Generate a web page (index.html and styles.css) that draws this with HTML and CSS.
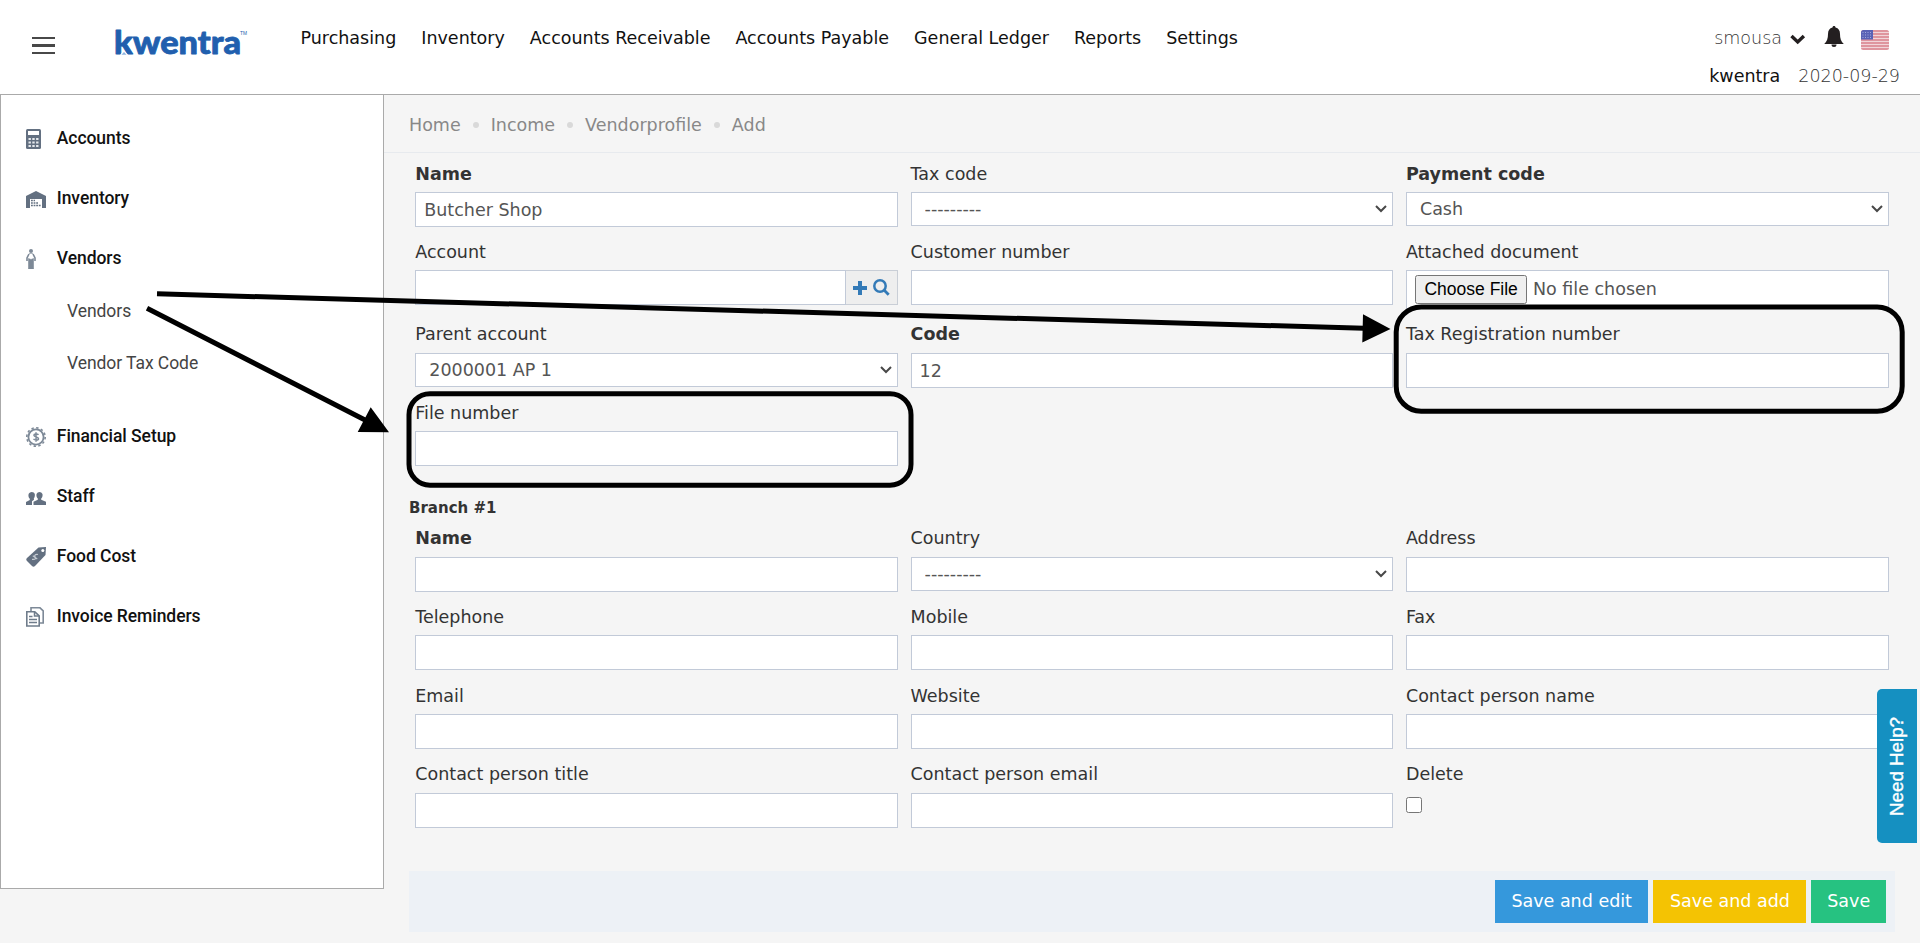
FILE: index.html
```html
<!DOCTYPE html>
<html lang="en">
<head>
<meta charset="utf-8">
<title>Kwentra - Add vendor profile</title>
<link rel="stylesheet" href="styles.css">
</head>
<body>
<header class="topbar">
  <button class="menu-toggle" aria-label="Toggle menu"><i class="bar"></i><i class="bar mid"></i><i class="bar"></i></button>
  <svg class="logo" width="132" height="30" viewBox="0 0 132 30">
    <text class="logo-word" x="-1" y="26.300" textLength="127" lengthAdjust="spacingAndGlyphs">kwentra</text>
    <path d="M5 26.800l4-4.300 4 4.300z" fill="#fff"/>
    <path d="M6.500 26.800l2.500-2.800 2.500 2.800z" fill="#8fb4e0"/>
    <text class="logo-tm" x="125" y="7" textLength="7" lengthAdjust="spacingAndGlyphs">TM</text>
  </svg>
  <nav class="mainnav">
    <a>Purchasing</a><a>Inventory</a><a>Accounts Receivable</a><a>Accounts Payable</a><a>General Ledger</a><a>Reports</a><a>Settings</a>
  </nav>
  <div class="account">
    <div class="account-top">
      <span class="light">smousa</span>
      <svg class="chev" width="16" height="11" viewBox="0 0 16 11"><path d="M1.500 2l6.200 6 6.200-6" fill="none" stroke="#231f20" stroke-width="3.400"/></svg>
      <svg class="bell" width="20" height="22" viewBox="0 0 20 22"><path d="M10 0c1 0 1.500.7 1.500 1.600 3 .7 4.500 3 4.500 6.400 0 4.500 1 7.500 3.800 10H.2C3 15.500 4 12.500 4 8c0-3.400 1.500-5.700 4.500-6.400C8.500.7 9 0 10 0zM7.500 18.500h5a2.500 2.500 0 0 1-5 0z" fill="#231f20"/></svg>
      <svg class="flag" width="28" height="20" viewBox="0 0 28 20">
        <clipPath id="fl"><rect width="28" height="20" rx="2.500"/></clipPath>
        <g clip-path="url(#fl)"><rect width="28" height="20" fill="#f1d5d9"/>
        <path d="M0 1h28M0 4h28M0 7h28M0 10h28M0 13h28M0 16h28M0 19h28" stroke="#d9808a" stroke-width="1.500"/>
        <rect width="12" height="9.500" fill="#5a62b5"/><path d="M1.500 2.500h10M1.500 5h10M1.500 7.500h10" stroke="#a3a8dc" stroke-dasharray="1 1.500"/></g>
      </svg>
    </div>
    <div class="account-sub"><span>kwentra</span><span class="light">2020-09-29</span></div>
  </div>
</header>
<div class="layout">
  <aside class="sidebar">
    <a class="item"><svg width="20" height="20" viewBox="0 0 20 20"><rect width="15" height="20" rx="1.500" fill="#637081"/><rect x="2" y="2" width="11" height="4" fill="#fff"/><path d="M2.500 10h10M2.500 13.500h10M2.500 17h10" stroke="#e6e9ed" stroke-width="2.200" stroke-dasharray="2.400 1.400"/></svg><span>Accounts</span></a>
    <a class="item"><svg width="20" height="20" viewBox="0 0 20 20"><path d="M0 7l10-5 10 5v12H0z" fill="#637081"/><path d="M4 10h12v9H4z" fill="#fff"/><path d="M5 11.500h4M5 14h7M5 16.500h10" stroke="#637081" stroke-width="1.600" stroke-dasharray="1.800 .8"/></svg><span>Inventory</span></a>
    <a class="item"><svg width="20" height="20" viewBox="0 0 20 20"><circle cx="5" cy="2" r="2" fill="#7d8997"/><path d="M3 5L1 9v3M7 5l2 4v3" fill="none" stroke="#7d8997" stroke-width="1.600"/><path d="M3 4.500h4M2.500 9.500L5 10.500l2.500-1V20h-5z" fill="#7d8997" stroke="#7d8997" stroke-width=".6"/></svg><span>Vendors</span></a>
    <div class="subitems"><a>Vendors</a><a>Vendor Tax Code</a></div>
    <a class="item"><svg width="20" height="20" viewBox="0 0 20 20"><circle cx="10" cy="10" r="7.600" fill="none" stroke="#7d8997" stroke-width="1.800"/><circle cx="10" cy="10" r="9.200" fill="none" stroke="#7d8997" stroke-width="1.600" stroke-dasharray="2.400 2.400"/><path d="M12.500 7.800c-1-1.300-4.600-1.300-4.600.5 0 2 4.600 1.300 4.600 3.400 0 1.900-3.900 1.700-5 .2M10 5.200v9.600" fill="none" stroke="#7d8997" stroke-width="1.500"/></svg><span>Financial Setup</span></a>
    <a class="item"><svg width="20" height="20" viewBox="0 0 20 20"><path d="M10.500 7a3.500 4 0 0 1 6 0c.3 2-.3 3.500-1.300 4.500v1.200l4.800 2V18H7.500v-3.300l4.300-2v-1.200c-1-1-1.600-2.500-1.300-4.500z" fill="#637081"/><path d="M2.500 7.500C3 4.300 8 4 8.800 7c.3 2-.3 3.500-1 4.500l.2 1.300-2 1.500V18H0v-3l3.800-2v-1.200c-1-1-1.600-2.300-1.300-4.300z" fill="#637081"/></svg><span>Staff</span></a>
    <a class="item"><svg width="20" height="20" viewBox="0 0 20 20"><path d="M12.500.5L20 0l-.5 8L9 19c-1 1-2 1-3 0l-5-5c-1-1-1-2 0-3z" fill="#637081"/><circle cx="16.800" cy="3.500" r="1.500" fill="#fff"/><path d="M12 7.500c-2-.6-4 .6-3 2.300s.8 3-3 2.500M6.800 8.800l4.500 3.200" fill="none" stroke="#c4cad1" stroke-width="1.200"/></svg><span>Food Cost</span></a>
    <a class="item"><svg width="20" height="20" viewBox="0 0 20 20"><path d="M5 4V.8h9l3.200 3V16H14" fill="none" stroke="#7d8997" stroke-width="1.600"/><path d="M.8 4.800h8l4.400 4V19H.8z" fill="#fff" stroke="#6f7c8b" stroke-width="1.600"/><path d="M8.500 5v4H13M3 9.500h3.500M3 12.500h8M3 15.500h8" fill="none" stroke="#6f7c8b" stroke-width="1.500"/></svg><span>Invoice Reminders</span></a>
  </aside>
  <main class="content">
    <div class="crumbs"><a>Home</a><i></i><a>Income</a><i></i><a>Vendorprofile</a><i></i><a>Add</a></div>
    <form class="form">
      <div class="grid">
        <div class="field"><label class="req">Name</label><input class="control" value="Butcher Shop"></div>
        <div class="field"><label>Tax code</label><select class="control"><option>---------</option></select></div>
        <div class="field"><label class="req">Payment code</label><select class="control"><option>Cash</option></select></div>
        <div class="field tall"><label>Account</label><div class="group"><input class="control"><span class="addon">
          <svg width="14" height="14" viewBox="0 0 14 14"><path d="M7 0v14M0 7h14" stroke="#337ab7" stroke-width="4"/></svg>
          <svg width="17" height="17" viewBox="0 0 17 17"><circle cx="7" cy="7" r="5.700" fill="none" stroke="#337ab7" stroke-width="2.500"/><path d="M11 11l4.700 4.700" stroke="#337ab7" stroke-width="2.800"/></svg></span></div></div>
        <div class="field"><label>Customer number</label><input class="control"></div>
        <div class="field"><label>Attached document</label><input class="control file" type="file"></div>
        <div class="field raised"><label>Parent account</label><select class="control"><option>2000001 AP 1</option></select></div>
        <div class="field raised"><label class="req">Code</label><input class="control" value="12"></div>
        <div class="field raised"><label>Tax Registration number</label><input class="control"></div>
        <div class="field"><label>File number</label><input class="control"></div>
      </div>
      <h5 class="branch">Branch #1</h5>
      <div class="grid branch-grid">
        <div class="field"><label class="req">Name</label><input class="control"></div>
        <div class="field"><label>Country</label><select class="control"><option>---------</option></select></div>
        <div class="field"><label>Address</label><input class="control"></div>
        <div class="field"><label>Telephone</label><input class="control"></div>
        <div class="field"><label>Mobile</label><input class="control"></div>
        <div class="field"><label>Fax</label><input class="control"></div>
        <div class="field"><label>Email</label><input class="control"></div>
        <div class="field"><label>Website</label><input class="control"></div>
        <div class="field"><label>Contact person name</label><input class="control"></div>
        <div class="field"><label>Contact person title</label><input class="control"></div>
        <div class="field"><label>Contact person email</label><input class="control"></div>
        <div class="field"><label>Delete</label><input class="check" type="checkbox"></div>
      </div>
      <div class="actions"><button type="button" class="btn blue">Save and edit</button><button type="button" class="btn yellow">Save and add</button><button type="button" class="btn green">Save</button></div>
    </form>
  </main>
</div>
<div class="help">Need Help?</div>
<svg class="marks" width="1920" height="943" viewBox="0 0 1920 943">
  <g fill="none" stroke="#000" stroke-width="5">
    <rect x="409" y="393.700" width="502" height="91.500" rx="21"/>
    <rect x="1396.200" y="306.900" width="506" height="104.300" rx="25"/>
    <path d="M157 293.800L1364 328.300M147 308.300L366 420.500"/>
  </g>
  <path d="M1363 314.200l27.500 14.800-28.200 13.500zM370.700 407.300L389 432.300l-31.300-.2z"/>
</svg>
</body>
</html>
```
FILE: styles.css
```css
* { box-sizing: border-box; }
body {
  margin: 0;
  height: 943px;
  overflow: hidden;
  background: #f5f5f5;
  color: #333;
  font: 17.5px/25px "DejaVu Sans", Verdana, sans-serif;
}
input, select, button { font: inherit; margin: 0; }

.topbar {
  display: flex;
  align-items: flex-start;
  height: 94px;
  background: #fff;
  color: #111;
}
.menu-toggle {
  display: flex;
  flex-direction: column;
  justify-content: space-between;
  width: 23px;
  height: 17px;
  margin: 37px 60px 0 32px;
  padding: 0;
  border: 0;
  background: none;
}
.bar { height: 2px; background: #484848; }
.bar.mid { height: 3px; }
.logo { margin-top: 28px; flex: none; overflow: visible; }
.logo-word {
  font: 900 31.5px Lato, sans-serif;
  fill: #215fae;
  stroke: #215fae;
  stroke-width: .8;
  stroke-linejoin: round;
}
.logo-tm { font: 5px "Liberation Sans", sans-serif; fill: #215fae; }
.mainnav { display: flex; gap: 25px; margin: 26px 0 0 53.500px; white-space: nowrap; }
.account { margin: 26px 20px 0 auto; }
.account-top { display: flex; align-items: flex-start; justify-content: flex-end; height: 38px; padding-right: 11.500px; }
.light { font-family: "DejaVu Sans Light", "DejaVu Sans", sans-serif; font-weight: 200; color: #333; }
.chev { margin: 8px 0 0 8px; }
.bell { margin: 0 0 0 17.500px; }
.flag { margin: 4px 0 0 17px; }
.account-sub { display: flex; gap: 18px; }

.layout { display: flex; border-top: 1px solid #aaa; }
.sidebar {
  flex: none;
  width: 384px;
  height: 794px;
  padding-top: 13px;
  border: 1px solid #aaa;
  border-top: 0;
  background: #fff;
  font-family: Roboto, sans-serif;
  letter-spacing: -.06px;
}
.item {
  display: flex;
  align-items: center;
  gap: 10.800px;
  height: 60px;
  padding-left: 25px;
  font-weight: 500;
  color: #111;
}
.item span { padding-top: 1px; }
.item svg { margin-top: 1px; }
.subitems { height: 118px; padding: 11px 0 0 66px; color: #444; }
.subitems a { display: block; height: 52px; }

.content { flex: 1; min-width: 0; }
.crumbs {
  display: flex;
  align-items: center;
  height: 58px;
  padding: 3px 0 0 25px;
  border-bottom: 1px solid #e7eaee;
  color: #888;
}
.crumbs i { width: 6px; height: 6px; margin: 0 12px; border-radius: 50%; background: #d9d9d9; }
.form { padding: 8.600px 25px 0; }
.grid { display: grid; grid-template-columns: repeat(3, 1fr); gap: 13.750px 12.500px; padding: 0 6.250px; }
.field { height: 65px; }
.field.tall { height: 68.500px; }
.field label { display: block; height: 25px; margin-bottom: 5px; }
.field.raised label { margin: -1px 0 6px; }
.field .req { font-weight: 700; }
.control {
  display: block;
  width: 100%;
  height: 35px;
  padding: 1px 7.500px 0 8px;
  border: 1px solid #c2cad8;
  border-radius: 0;
  background: #fff;
  color: #555;
  outline: 0;
}
select.control {
  height: 34px;
  padding: 2px 0 0 13px;
  appearance: none;
  background: #fff url("data:image/svg+xml,%3Csvg xmlns='http://www.w3.org/2000/svg' width='12' height='8'%3E%3Cpath d='M1 1l5 5 5-5' fill='none' stroke='%23484848' stroke-width='2'/%3E%3C/svg%3E") no-repeat right 5px center;
}
.file { height: 38.500px; padding: 4px 8px 0; }
.file::file-selector-button {
  width: 112.500px;
  height: 29px;
  margin-right: 5.500px;
  padding: 0;
  font: 17.5px "Liberation Sans", Arial, sans-serif;
}
.group { display: flex; }
.addon {
  flex: none;
  display: flex;
  align-items: center;
  justify-content: center;
  gap: 6px;
  width: 52.500px;
  border: 1px solid #c9ced6;
  border-left: 0;
  background: #eee;
}
.branch { height: 50px; margin: 0; padding-top: 33.500px; font-size: 15px; line-height: 16px; }
.branch-grid { margin-top: 9.850px; row-gap: 13.350px; }
.branch-grid .field { height: 65.400px; }
.branch-grid label { margin-bottom: 5.400px; }
.check { display: block; width: 16px; height: 16px; margin-top: 10px; }
.actions {
  display: flex;
  justify-content: flex-end;
  gap: 5px;
  height: 61px;
  margin-top: 43px;
  padding: 9px 9px 0;
  background: #edf1f6;
}
.btn { height: 43px; padding: 0 16.500px; border: 0; border-radius: 0; color: #fff; white-space: nowrap; }
.btn.blue { background: #3598dc; }
.btn.yellow { background: #f4c303; }
.btn.green { padding: 0 15.800px; background: #26c281; }

.help {
  position: absolute;
  right: 3px;
  top: 689px;
  width: 40px;
  height: 154px;
  border-radius: 0 5px 5px 0;
  background: #1590c1;
  color: #fff;
  font: 18.750px/40px "Liberation Sans", Arial, sans-serif;
  -webkit-text-stroke: .4px #fff;
  text-align: center;
  writing-mode: vertical-rl;
  transform: rotate(180deg);
}
.marks { position: absolute; left: 0; top: 0; pointer-events: none; }
```
